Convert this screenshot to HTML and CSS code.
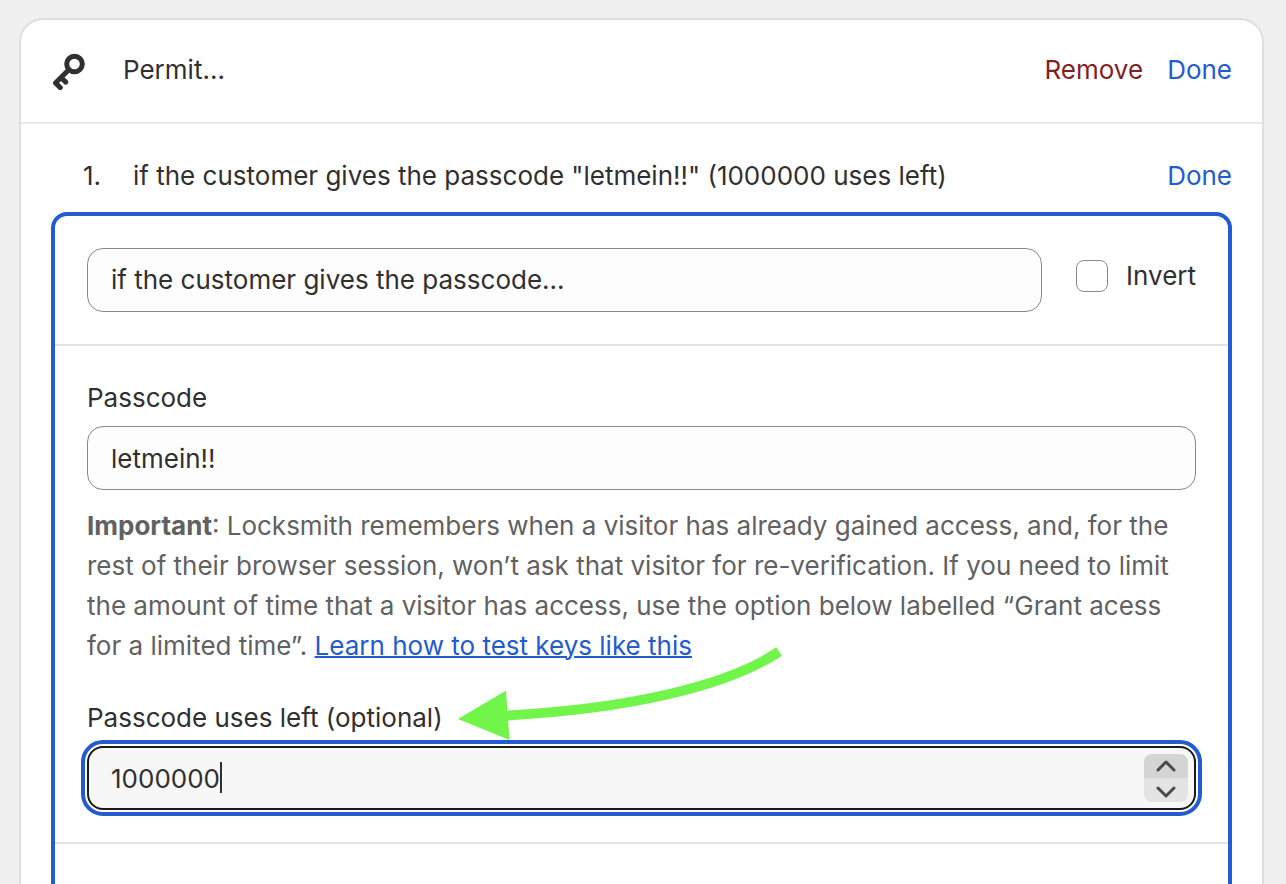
FILE: index.html
```
<!DOCTYPE html>
<html lang="en">
<head>
<meta charset="utf-8">
<title>Key conditions</title>
<link rel="stylesheet" href="styles.css">
</head>
<body>
<main class="card">
  <header class="card-header">
    <svg class="key-icon" viewBox="0 0 36 40" aria-hidden="true">
      <circle cx="23.500" cy="14" r="7.800"/>
      <path d="M17.500 20 4.500 33M4.500 33l4.800 4.600M10 27.500l4.800 4.600"/>
    </svg>
    <h1 class="title">Permit...</h1>
    <button type="button" class="action danger">Remove</button>
    <button type="button" class="action">Done</button>
  </header>
  <section class="card-body">
    <div class="condition">
      <span class="number">1.</span>
      <span class="summary">if the customer gives the passcode "letmein!!" (1000000 uses left)</span>
      <button type="button" class="action">Done</button>
    </div>
    <div class="panel">
      <div class="section type-row">
        <select class="field" aria-label="Condition">
          <option>if the customer gives the passcode...</option>
        </select>
        <label class="invert"><input type="checkbox" class="checkbox">Invert</label>
      </div>
      <div class="section fields">
        <label class="label" for="passcode">Passcode</label>
        <input class="field" id="passcode" type="text" value="letmein!!">
        <p class="help"><strong>Important</strong>: Locksmith remembers when a visitor has already gained access, and, for the rest of their browser session, won’t ask that visitor for re-verification. If you need to limit the amount of time that a visitor has access, use the option below labelled “Grant acess for a limited time”. <a href="#keys">Learn how to test keys like this</a></p>
        <div class="uses-label">
          <label class="label" for="uses">Passcode uses left (optional)</label>
          <svg class="arrow" viewBox="0 0 330 100" aria-hidden="true">
            <path class="arrow-line" d="M48 75.500C170 69 270 46 321 11.500"/>
            <path class="arrow-head" d="M0 79 48 50.500 51.500 100Z"/>
          </svg>
        </div>
        <div class="number-field">
          <input class="field focused" id="uses" type="number" value="1000000">
          <span class="caret"></span>
          <div class="stepper">
            <button type="button" class="step up" aria-label="Increase"><svg viewBox="0 0 20 12"><path d="M2 10 10 2l8 8"/></svg></button>
            <button type="button" class="step down" aria-label="Decrease"><svg viewBox="0 0 20 12"><path d="M2 2l8 8 8-8"/></svg></button>
          </div>
        </div>
      </div>
    </div>
  </section>
</main>
</body>
</html>
```
FILE: styles.css
```
* { box-sizing: border-box; }
body {
  margin: 0;
  padding: 18px 22px 0 19px;
  min-height: 100vh;
  display: flex;
  background: #f0f0f0;
  color: #303030;
  font: 26px/40px Inter, "Liberation Sans", sans-serif;
}
button, input, select { font: inherit; color: inherit; margin: 0; }
.card {
  flex: 1;
  display: flex;
  flex-direction: column;
  min-width: 0;
  background: #fff;
  border: 2px solid #dfdfdf;
  border-bottom: 0;
  border-radius: 24px 24px 0 0;
}
.card-header {
  display: flex;
  align-items: center;
  padding: 30px 30px 32px;
  border-bottom: 2px solid #e8e8e8;
}
.key-icon {
  width: 36px;
  height: 40px;
  margin-right: 36px;
  fill: none;
  stroke: #303030;
  stroke-width: 5;
  stroke-linecap: round;
  stroke-linejoin: round;
}
.title { flex: 1; margin: 0; font-size: inherit; font-weight: 400; }
.action {
  padding: 0;
  border: 0;
  background: none;
  color: #235bd0;
  cursor: pointer;
}
.action.danger { color: #821f26; margin-right: 24px; }
.card-body {
  flex: 1;
  display: flex;
  flex-direction: column;
  padding: 32px 30px 0;
}
.condition { display: flex; padding: 0 0 16px 32px; }
.number { width: 50px; }
.summary { flex: 1; }
.panel {
  flex: 1;
  border: 4px solid #235bd0;
  border-bottom: 0;
  border-radius: 16px 16px 0 0;
}
.section { padding: 32px; border-bottom: 2px solid #e3e3e3; }
.type-row { display: flex; align-items: flex-start; gap: 34px; }
.type-row .field { flex: 1; min-width: 0; }
.invert { display: flex; align-items: center; gap: 18px; padding-top: 8px; }
.checkbox {
  appearance: none;
  width: 32px;
  height: 32px;
  border: 1px solid #8a8a8a;
  border-radius: 8px;
  background: #fff;
}
.field {
  appearance: none;
  display: block;
  width: 100%;
  height: 64px;
  padding: 0 23px;
  border: 1px solid #8a8a8a;
  border-radius: 16px;
  background: #fdfdfd;
}
.fields { display: flex; flex-direction: column; }
.label { margin-bottom: 8px; }
.help { margin: 16px 0 32px; color: #616161; }
.help strong { font-weight: 700; }
.help a { color: #235bd0; text-decoration-thickness: 2px; }
.uses-label { position: relative; display: flex; }
.arrow {
  position: absolute;
  left: 371px;
  bottom: 6px;
  width: 330px;
  height: 100px;
}
.arrow-line { fill: none; stroke: #71f54b; stroke-width: 10; }
.arrow-head { fill: #71f54b; }
.number-field { position: relative; }
.field.focused {
  appearance: textfield;
  padding: 0 22px;
  border: 2px solid #1a1a1a;
  background: #f7f7f7;
  outline: 4px solid #235bd0;
  outline-offset: 2px;
}
.focused::-webkit-inner-spin-button { appearance: none; margin: 0; }
.caret {
  position: absolute;
  left: 133px;
  top: 16px;
  width: 2px;
  height: 31px;
  background: #303030;
}
.stepper {
  position: absolute;
  right: 8px;
  top: 8px;
  width: 44px;
  overflow: hidden;
  border-radius: 8px;
}
.step {
  display: flex;
  align-items: center;
  justify-content: center;
  width: 100%;
  height: 24px;
  padding: 0;
  border: 0;
  background: #e3e3e3;
}
.step.up { background: #d4d4d4; }
.step.down { padding-top: 4px; }
.step svg {
  width: 20px;
  height: 12px;
  fill: none;
  stroke: #4a4a4a;
  stroke-width: 3;
  stroke-linecap: round;
  stroke-linejoin: round;
}
```
